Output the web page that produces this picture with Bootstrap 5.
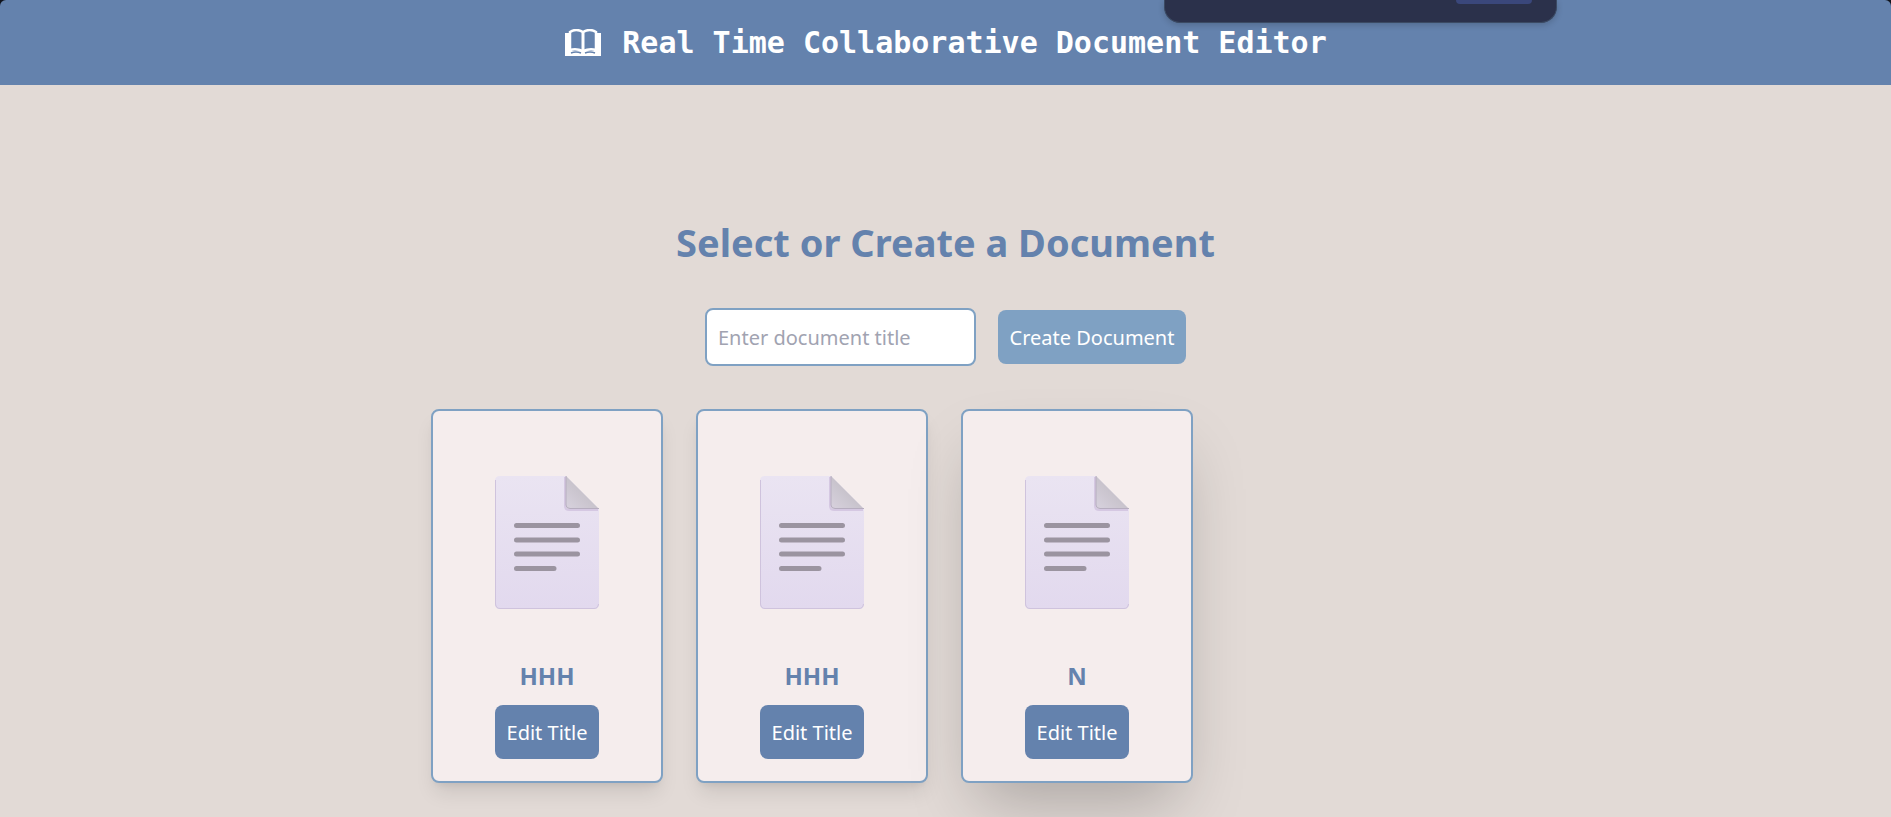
<!DOCTYPE html>
<html lang="en">
<head>
<meta charset="utf-8">
<meta name="viewport" content="width=device-width, initial-scale=1">
<title>Real Time Collaborative Document Editor</title>
<link rel="stylesheet" href="https://cdn.jsdelivr.net/npm/bootstrap@5.3.0/dist/css/bootstrap.min.css">
<style>
  body { background: #e2dad6; font-family: "Noto Sans", sans-serif; font-size: 20px; line-height: 32px; min-height: 100vh; }
  .site-header { background: #6482ad; min-height: 85px; border-radius: 6px 6px 0 0; }
  .backdrop { background: #10131c; height: 12px; margin-bottom: -12px; }
  .site-title { font: bold 30px/40px "DejaVu Sans Mono", monospace; color: #fff; }
  .book-icon { width: 38px; height: 28px; }
  .float-panel { right: 334px; top: 0; width: 393px; height: 23px; background: #2b314b; border-radius: 0 0 16px 16px; border: 1px solid #3b4a63; border-top: 0; box-shadow: 0 2px 6px rgba(0,0,0,.18); }
  .float-tab { right: 24px; top: 0; width: 76px; height: 4px; background: #3a477b; border-radius: 0 0 6px 6px; }
  .main-area { padding-top: 130px; }
  .page-heading { font-size: 38px; line-height: 54px; font-weight: 700; color: #6482ad; margin-bottom: 39px; }
  .create-form { column-gap: 22px; }
  .title-input { width: 271px; height: 58px; border: 2px solid #7fa1c3; border-radius: 8px; padding: 0 11px; font-size: 20px; }
  .title-input::placeholder { color: #a1a3b1; }
  .create-btn, .edit-btn { height: 54px; border: 0; border-radius: 8px; color: #fff; font-size: 20px; padding: 2px 0 0; }
  .create-btn { background: #7fa1c3; width: 188px; }
  .edit-btn { background: #6482ad; width: 104px; }
  .doc-grid { display: grid; grid-template-columns: repeat(auto-fill, 232px); gap: 33px; max-width: 1029px; margin-top: 43px; }
  .doc-card { background: #f5eded; border: 2px solid #7fa1c3; border-radius: 8px; padding: 64px 16px 22px; box-shadow: 0 13px 20px -4px rgba(0,0,0,.1), 0 5px 8px -5px rgba(0,0,0,.1); }
  .doc-card.raised { box-shadow: 0 33px 66px -16px rgba(0,0,0,.25); }
  .doc-icon { width: 106px; height: 136px; }
  .doc-name { font-size: 24px; line-height: 32px; font-weight: 700; color: #6482ad; margin: 49px 0 13px; }
</style>
</head>
<body class="d-flex flex-column">
<div class="backdrop"></div>
<header class="site-header position-relative d-flex align-items-center justify-content-center">
  <h1 class="site-title d-flex align-items-center m-0">
    <svg class="book-icon" viewBox="0 0 38 28" fill="none" stroke="#fff" aria-hidden="true">
      <path d="M1 4H6V22H32V4H37V27H1Z" fill="#fff" stroke="none"/>
      <path d="M6 21V3Q12-1 19 3Q26-1 32 3V21Q26 19 19 22Q12 19 6 21Z" fill="#6482ad" stroke-width="2.500"/>
      <path d="M19 2V26" stroke-width="3"/>
      <path d="M7 24Q12 22 17 24M21 24Q26 22 31 24" stroke="#6482ad" stroke-width="1.500"/>
    </svg>
    <span class="ms-3 ps-1">Real Time Collaborative Document Editor</span>
  </h1>
  <div class="float-panel position-absolute"><div class="float-tab position-absolute"></div></div>
</header>

<main class="main-area container-fluid flex-grow-1 d-flex flex-column align-items-center">
  <h2 class="page-heading text-center">Select or Create a Document</h2>
  <form class="create-form d-flex align-items-center justify-content-center">
    <input class="title-input" type="text" placeholder="Enter document title" aria-label="Document title">
    <button class="create-btn" type="button">Create Document</button>
  </form>

  <section class="doc-grid w-100">
    <article class="doc-card d-flex flex-column align-items-center">
      <svg class="doc-icon" viewBox="0 0 106 136" aria-hidden="true">
        <defs>
          <linearGradient id="paper" x1="0" y1="0" x2="0" y2="1"><stop stop-color="#eae4f2"/><stop offset="1" stop-color="#e2d9ee"/></linearGradient>
          <linearGradient id="fold" x1="0" y1="1" x2=".5" y2=".5"><stop stop-color="#d8d2de"/><stop offset="1" stop-color="#c8c3cc"/></linearGradient>
          <symbol id="document" viewBox="0 0 106 136">
            <path d="M6 1H72L105 34V129Q105 134 100 134H6Q1 134 1 129V6Q1 1 6 1Z" fill="url(#paper)"/>
            <path d="M1.500 5V129Q2 133.500 6 133.500H100Q104 133.500 104.500 129" fill="none" stroke="#cfc3dd"/>
            <path d="M71 2V31Q71 35 75 35H104" fill="none" stroke="#d5c8e2" stroke-width="2"/>
            <path d="M72 1L105 34H76Q72 34 72 30Z" fill="url(#fold)"/>
            <path d="M72 1V30Q72 33.500 76 33.500H105" fill="none" stroke="#b6adbf"/>
            <path d="M22.500 50.500H83.500M22.500 65H83.500M22.500 79H83.500M22.500 93.500H60" fill="none" stroke="#9b94a0" stroke-width="5" stroke-linecap="round"/>
          </symbol>
        </defs>
        <use href="#document"/>
      </svg>
      <h3 class="doc-name">HHH</h3>
      <button class="edit-btn" type="button">Edit Title</button>
    </article>
    <article class="doc-card d-flex flex-column align-items-center">
      <svg class="doc-icon" aria-hidden="true"><use href="#document"/></svg>
      <h3 class="doc-name">HHH</h3>
      <button class="edit-btn" type="button">Edit Title</button>
    </article>
    <article class="doc-card raised d-flex flex-column align-items-center">
      <svg class="doc-icon" aria-hidden="true"><use href="#document"/></svg>
      <h3 class="doc-name">N</h3>
      <button class="edit-btn" type="button">Edit Title</button>
    </article>
  </section>
</main>
<script src="https://cdn.jsdelivr.net/npm/bootstrap@5.3.0/dist/js/bootstrap.bundle.min.js"></script>
</body>
</html>
